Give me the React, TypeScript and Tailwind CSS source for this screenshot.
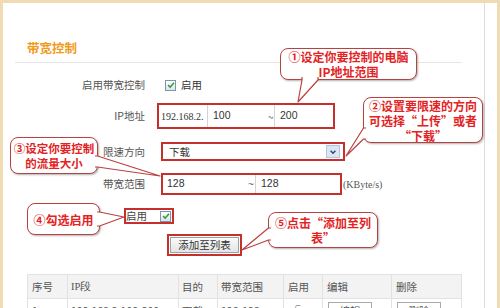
import type { ReactNode } from 'react';

const Check = () => (
  <span className="inline-flex h-[11px] w-[11px] items-center justify-center border border-[#7f93ad] bg-gradient-to-b from-white to-[#dce3eb]">
    <svg viewBox="0 0 10 10" className="h-[8px] w-[8px]">
      <path d="M1.4 5.2 L4 7.7 L8.7 2.2" fill="none" stroke="#2f9e2f" strokeWidth="1.9" />
    </svg>
  </span>
);

function Bubble({ className, children }: { className: string; children: ReactNode }) {
  return (
    <div
      className={`absolute flex flex-col items-center justify-center rounded-[8px] border-[1.5px] border-[#b8423f] bg-white font-bold leading-[15px] text-[#e3231f] shadow-[1px_1px_2px_rgba(0,0,0,0.3)] ${className}`}
    >
      {children}
    </div>
  );
}

// tails drawn over the bubbles, the white fill hides the border at the base
const tails = [
  'M302 77 L302 80 L298 102 L318 80 L318 77',
  'M366 128 L363.5 128 L346 156 L363.5 139 L366 139',
  'M95 156 L97.5 156 L160 176 L97.5 167 L95 167',
  'M97 212 L99.5 212 L124 217 L99.5 226 L97 226',
  'M271 228 L268.5 228 L242 250 L268.5 240 L271 240',
];

const Label = ({ children }: { children: ReactNode }) => (
  <div className="ml-[12px] w-[130px] text-right text-[10.5px] text-[#555]">{children}</div>
);

export default function App() {
  return (
    <div className="relative h-[308px] w-[500px] overflow-hidden bg-[#efdcb2] px-[3px] pt-[3px] font-['Noto_Sans_CJK_SC',sans-serif]">
      <div className="h-full w-[494px] bg-white">
        <div className="h-full w-[482px] border-r border-[#dcdcdc]">
          {/* title */}
          <div className="ml-[12px] w-[447px] border-b border-[#e6e6e6] pb-[5px] pl-[12px] pt-[36px] text-[12.5px] font-semibold leading-[18px] text-[#f09a1c]">
            带宽控制
          </div>

          {/* enable */}
          <div className="mt-[14px] flex h-[16px] items-center">
            <Label>启用带宽控制</Label>
            <div className="ml-[20px] flex items-center">
              <Check />
              <span className="ml-[5px] text-[10.5px] text-[#333]">启用</span>
            </div>
          </div>

          {/* ip */}
          <div className="mt-[10px] flex h-[26px] items-center">
            <Label>IP地址</Label>
            <div className="ml-[12px] flex h-full w-[178px] border-2 border-[#c4302b] text-[10.5px] text-[#333]">
              <span className="flex w-[48px] items-center pl-[2px] font-['Liberation_Serif',serif] text-[10px]">192.168.2.</span>
              <span className="flex w-[61px] items-center border-l border-[#d4d4d4] pl-[5px] font-['Liberation_Sans',sans-serif]">100</span>
              <span className="flex w-[7px] items-center border-r border-[#d4d4d4] text-[10px] text-[#666]">~</span>
              <span className="flex flex-1 items-center pl-[5px] font-['Liberation_Sans',sans-serif]">200</span>
            </div>
          </div>

          {/* direction */}
          <div className="mt-[13px] flex h-[19px] items-center">
            <Label>限速方向</Label>
            <div className="ml-[16px] flex h-full w-[184px] items-center justify-between border-2 border-[#c4302b] pl-[6px] pr-[3px] text-[10.5px] text-[#333]">
              <span>下载</span>
              <span className="flex h-[13px] w-[14px] items-center justify-center border border-[#b5c5dc] bg-[#dbe5f3]">
                <svg viewBox="0 0 10 10" className="h-[8px] w-[8px]">
                  <path d="M2 3.5 L5 6.5 L8 3.5" fill="none" stroke="#2b4a7a" strokeWidth="1.8" />
                </svg>
              </span>
            </div>
          </div>

          {/* range */}
          <div className="mt-[12px] flex h-[22px] items-center">
            <Label>带宽范围</Label>
            <div className="ml-[16px] flex h-full w-[181px] border-2 border-[#c4302b] font-['Liberation_Sans',sans-serif] text-[10.5px] text-[#333]">
              <span className="flex w-[85px] items-center pl-[4px]">128</span>
              <span className="flex w-[8px] items-center border-r border-[#d4d4d4] text-[10px] text-[#666]">~</span>
              <span className="flex flex-1 items-center pl-[5px]">128</span>
            </div>
            <span className="ml-[1px] font-['Liberation_Serif',serif] text-[10px] text-[#555]">(KByte/s)</span>
          </div>

          {/* enable rule */}
          <div className="ml-[121px] mt-[13px] flex h-[16px] w-[50px] items-center justify-between border-2 border-[#c4302b] pr-[1px] text-[10.5px] text-[#444]">
            <span className="leading-none">启用</span>
            <Check />
          </div>

          {/* add button */}
          <div className="ml-[164px] mt-[10px] flex h-[22px] w-[75px] border-2 border-[#c4302b] p-[1px]">
            <div className="flex flex-1 items-center justify-center border border-[#a0a0a0] bg-gradient-to-b from-[#fafafa] to-[#e4e4e4] text-[10.5px] text-[#333]">
              添加至列表
            </div>
          </div>

          {/* list */}
          <table className="ml-[24px] mt-[18px] w-[434px] table-fixed border-collapse text-left text-[10.5px] text-[#555]">
            <colgroup>
              <col className="w-[40px]" />
              <col className="w-[111px]" />
              <col className="w-[39px]" />
              <col className="w-[66px]" />
              <col className="w-[39px]" />
              <col className="w-[69px]" />
              <col className="w-[70px]" />
            </colgroup>
            <thead>
              <tr className="h-[24px] bg-[#f3f3f3]">
                <th className="border border-[#e2e2e2] pl-[4px] font-normal">序号</th>
                <th className="border border-[#e2e2e2] pl-[3px] font-['Liberation_Serif',serif] font-normal">IP段</th>
                <th className="border border-[#e2e2e2] pl-[3px] font-normal">目的</th>
                <th className="border border-[#e2e2e2] pl-[3px] font-normal">带宽范围</th>
                <th className="border border-[#e2e2e2] pl-[4px] font-normal">启用</th>
                <th className="border border-[#e2e2e2] pl-[4px] font-normal">编辑</th>
                <th className="border border-[#e2e2e2] pl-[4px] font-normal">删除</th>
              </tr>
            </thead>
            <tbody>
              <tr className="h-[24px]">
                <td className="border border-[#e2e2e2] pl-[4px]">1</td>
                <td className="border border-[#e2e2e2] pl-[3px]">192.168.2.100-200</td>
                <td className="border border-[#e2e2e2] pl-[3px]">下载</td>
                <td className="border border-[#e2e2e2] pl-[3px]">128-128</td>
                <td className="border border-[#e2e2e2] pl-[6px]">√</td>
                <td className="border border-[#e2e2e2] pl-[5px]">
                  <span className="inline-block w-[44px] border border-[#aaa] text-center">编辑</span>
                </td>
                <td className="border border-[#e2e2e2] pl-[5px]">
                  <span className="inline-block w-[44px] border border-[#aaa] text-center">删除</span>
                </td>
              </tr>
            </tbody>
          </table>
        </div>
      </div>

      {/* callouts */}
      <Bubble className="left-[280px] top-[48px] h-[32px] w-[137px] text-[12px]">
        <span>①设定你要控制的电脑</span>
        <span>IP地址范围</span>
      </Bubble>
      <Bubble className="left-[363px] top-[97px] h-[46px] w-[120px] text-[12px]">
        <span>②设置要限速的方向</span>
        <span>可选择“上传”或者</span>
        <span>“下载”</span>
      </Bubble>
      <Bubble className="left-[10px] top-[137px] h-[37px] w-[88px] text-[11.5px]">
        <span>③设定你要控制</span>
        <span>的流量大小</span>
      </Bubble>
      <Bubble className="left-[27px] top-[203px] h-[32px] w-[73px] text-[12px]">
        <span>④勾选启用</span>
      </Bubble>
      <Bubble className="left-[268px] top-[212px] h-[36px] w-[110px] text-[12px]">
        <span>⑤点击“添加至列</span>
        <span>表”</span>
      </Bubble>

      <svg className="pointer-events-none absolute left-0 top-0 h-[308px] w-[500px]" viewBox="0 0 500 308">
        {tails.map((d) => (
          <path key={d} d={d} fill="white" stroke="#b8423f" strokeWidth="1.2" strokeLinejoin="round" />
        ))}
      </svg>
    </div>
  );
}
